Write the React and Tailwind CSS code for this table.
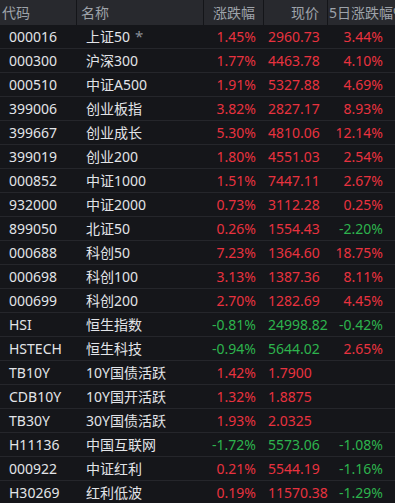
const rows = [
  ["000016", "上证50", "1.45%", "2960.73", "3.44%", true],
  ["000300", "沪深300", "1.77%", "4463.78", "4.10%"],
  ["000510", "中证A500", "1.91%", "5327.88", "4.69%"],
  ["399006", "创业板指", "3.82%", "2827.17", "8.93%"],
  ["399667", "创业成长", "5.30%", "4810.06", "12.14%"],
  ["399019", "创业200", "1.80%", "4551.03", "2.54%"],
  ["000852", "中证1000", "1.51%", "7447.11", "2.67%"],
  ["932000", "中证2000", "0.73%", "3112.28", "0.25%"],
  ["899050", "北证50", "0.26%", "1554.43", "-2.20%"],
  ["000688", "科创50", "7.23%", "1364.60", "18.75%"],
  ["000698", "科创100", "3.13%", "1387.36", "8.11%"],
  ["000699", "科创200", "2.70%", "1282.69", "4.45%"],
  ["HSI", "恒生指数", "-0.81%", "24998.82", "-0.42%"],
  ["HSTECH", "恒生科技", "-0.94%", "5644.02", "2.65%"],
  ["TB10Y", "10Y国债活跃", "1.42%", "1.7900", ""],
  ["CDB10Y", "10Y国开活跃", "1.32%", "1.8875", ""],
  ["TB30Y", "30Y国债活跃", "1.93%", "2.0325", ""],
  ["H11136", "中国互联网", "-1.72%", "5573.06", "-1.08%"],
  ["000922", "中证红利", "0.21%", "5544.19", "-1.16%"],
  ["H30269", "红利低波", "0.19%", "11570.38", "-1.29%"],
];

const tone = (v) => (v.startsWith("-") ? "text-[#2db34d]" : "text-[#e8323f]");

export default function App() {
  return (
    <div
      className="w-[395px] h-[503px] overflow-hidden bg-[#15161a] text-[14px] leading-none"
      style={{ fontFamily: '"Noto Sans", "Noto Sans CJK SC", sans-serif' }}
    >
      <div className="w-[420px]">
        {/* header */}
        <div className="grid grid-cols-[77px_127px_60px_64px_92px] h-[25px] bg-[#28292e] text-[#9ea3aa] whitespace-nowrap">
          <div className="flex items-center pl-[2px] border-r border-[#141519]">代码</div>
          <div className="flex items-center pl-[4px] border-r border-[#141519]">名称</div>
          <div className="flex items-center justify-end pr-[8px] border-r border-[#141519]">涨跌幅</div>
          <div className="flex items-center justify-end pr-[8px] border-r border-[#141519]">现价</div>
          <div className="flex items-center pl-[1px]">5日涨跌幅%</div>
        </div>

        {/* rows */}
        {rows.map(([code, name, chg, price, chg5, star]) => (
          <div
            key={code}
            className="grid grid-cols-[77px_127px_60px_64px_62px] h-[24px] border-b border-[#25262b] whitespace-nowrap"
          >
            <div className="flex items-center pl-[9px] text-[#e2e4e8]">{code}</div>
            <div className="flex items-center pl-[9px] text-[#e2e4e8]">
              {name}
              {star && <span className="ml-[5px] text-[#8a8e96] text-[15px]">*</span>}
            </div>
            <div className={`flex items-center justify-end pr-[8px] ${tone(chg)}`}>{chg}</div>
            <div className={`flex items-center pl-[4px] ${tone(chg)}`}>{price}</div>
            <div className={`flex items-center justify-end pr-[7px] ${tone(chg5)}`}>{chg5}</div>
          </div>
        ))}
      </div>
    </div>
  );
}
